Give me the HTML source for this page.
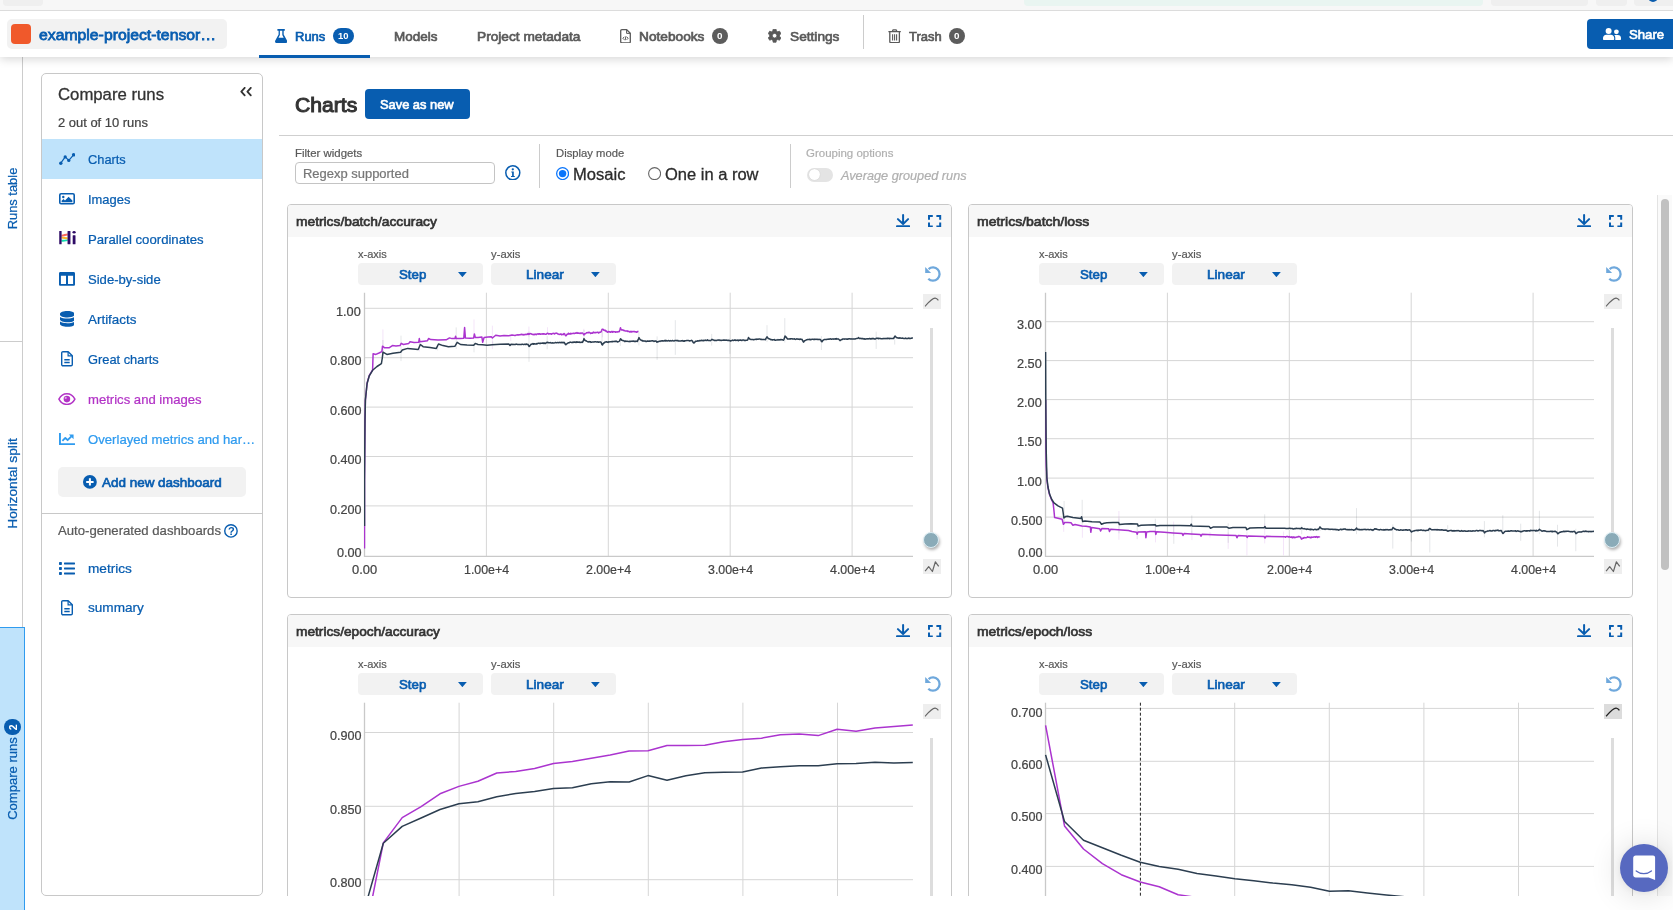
<!DOCTYPE html>
<html lang="en"><head><meta charset="utf-8"><title>Charts - Compare runs</title><style>
html,body{margin:0;padding:0}
body{width:1673px;height:910px;overflow:hidden;position:relative;background:#fff;
font-family:"Liberation Sans",Arial,sans-serif;-webkit-font-smoothing:antialiased}
.b,.i,.t{position:absolute;display:block}
.t{white-space:nowrap;line-height:1;transform-origin:0 50%}
.r{transform-origin:50% 50%}
#root{position:absolute;left:0;top:0;width:1673px;height:910px;overflow:hidden;will-change:transform}
.hd{position:absolute;left:0;top:0;z-index:6}
.clip{position:absolute;left:263px;top:136px;width:1410px;height:760px;overflow:hidden}
.clip>.in{position:absolute;left:-263px;top:-136px;width:1673px;height:910px}
</style></head>
<body>
<div id="root">
<div class="b" style="left:22px;top:57px;width:1px;height:570px;background:#ccc"></div><div class="b" style="left:0px;top:341px;width:23px;height:1px;background:#ccc"></div><span class="t r" style="left:12.40px;top:198.90px;font-size:13px;color:#085db0;width:200px;margin-left:-100px;text-align:center;margin-top:-6.50px;-webkit-text-stroke:0.234px #085db0;transform:rotate(-90deg) scaleX(0.9922);"><span id="t0">Runs table</span></span><span class="t r" style="left:12.40px;top:483.60px;font-size:13px;color:#085db0;width:200px;margin-left:-100px;text-align:center;margin-top:-6.50px;-webkit-text-stroke:0.234px #085db0;transform:rotate(-90deg) scaleX(1.0634);"><span id="t1">Horizontal split</span></span><div class="b" style="left:0px;top:627px;width:25px;height:290px;background:#bfe3fb;border-top:1px solid #2f9bef;border-right:1.500px solid #2f9bef;box-sizing:border-box"></div><span class="t r" style="left:12.40px;top:778.50px;font-size:13px;color:#085db0;width:200px;margin-left:-100px;text-align:center;margin-top:-6.50px;-webkit-text-stroke:0.234px #085db0;transform:rotate(-90deg) scaleX(1.0036);"><span id="t2">Compare runs</span></span><div class="b" style="left:4.3px;top:718.7px;width:16.4px;height:16.4px;background:#085db0;border-radius:9px"></div><span class="t r" style="left:12.60px;top:727.00px;font-size:10.5px;color:#fff;width:200px;margin-left:-100px;text-align:center;margin-top:-5.25px;font-weight:700;transform:rotate(-90deg) scaleX(0.9980);"><span id="t3">2</span></span><div class="b" style="left:41px;top:73px;width:222px;height:823px;border:1px solid #c8c8c8;border-radius:5px;box-sizing:border-box;background:#fff"></div><span class="t" id="t4" style="left:58.03px;top:87.02px;font-size:16.7px;color:#333;-webkit-text-stroke:0.301px #333;transform:scaleX(1.0025);">Compare runs</span><svg class="i" style="left:240px;top:87.4px" width="12.6" height="10" viewBox="0 0 12.6 10" ><path fill="none" stroke="#333" stroke-width="1.800" stroke-linecap="round" stroke-linejoin="round" d="M4.700.8 1.300 4.550l3.400 3.750M10.800.8 7.400 4.550l3.400 3.750"/></svg><span class="t" id="t5" style="left:57.88px;top:116.00px;font-size:13px;color:#444;-webkit-text-stroke:0.234px #444;transform:scaleX(0.9959);">2 out of 10 runs</span><div class="b" style="left:42px;top:139px;width:220px;height:40px;background:#bfe3fb"></div><svg class="i" style="left:59px;top:153px" width="16.4" height="12" viewBox="0 0 16.4 12" ><path fill="none" stroke="#085db0" stroke-width="1.150" d="M1.800 10.200 6.200 3.900 9.800 7.400 14.600 1.800"/><circle cx="1.800" cy="10.200" r="1.700" fill="#085db0"/><circle cx="6.200" cy="3.900" r="1.650" fill="#085db0"/><circle cx="9.800" cy="7.400" r="1.650" fill="#085db0"/><circle cx="14.600" cy="1.800" r="1.700" fill="#085db0"/></svg><span class="t" id="t6" style="left:88.18px;top:153.00px;font-size:13px;color:#085db0;-webkit-text-stroke:0.234px #085db0;transform:scaleX(0.9862);">Charts</span><svg class="i" style="left:59px;top:193px" width="16" height="11.6" viewBox="0 0 16 11.6" ><rect x=".8" y=".8" width="14.400" height="10" rx="1.300" fill="none" stroke="#085db0" stroke-width="1.600"/><circle cx="4.300" cy="4" r="1.200" fill="#085db0"/><path fill="#085db0" d="M2.600 9.300V7.800l1.900-1.900 1.500 1.500 3.600-3.700 3.800 3.800v1.800z"/></svg><span class="t" id="t7" style="left:88.18px;top:193.00px;font-size:13px;color:#085db0;-webkit-text-stroke:0.234px #085db0;transform:scaleX(0.9937);">Images</span><svg class="i" style="left:58.5px;top:231.3px" width="17.4" height="13.6" viewBox="0 0 17.4 13.6" ><path d="M2.400 3.700C4.500 3.700 6.500 2.600 8.700 2.600v1.900C6.500 4.500 4.500 5.800 2.400 5.800z" fill="#f8655b"/><path d="M2.400 5.800C4.500 5.800 6.500 6.300 8.700 6.300v2.100C6.500 8.400 4.500 7.600 2.400 7.600z" fill="#fbb52d"/><path d="M2.400 8.700C4.500 8.700 6.500 8.400 8.700 8.400v1.600C6.500 10 4.500 10.800 2.400 10.800z" fill="#12dcae"/><rect x=".25" y=".1" width="2.350" height="13.100" rx=".5" fill="#2e0b66"/><rect x="8.550" y=".1" width="2.900" height="13.100" rx=".5" fill="#2e0b66"/><rect x="13.700" y="4.200" width="2.800" height="9" rx=".5" fill="#2e0b66"/><ellipse cx="15.100" cy="1.300" rx="1.600" ry="1.250" fill="#2e0b66"/></svg><span class="t" id="t8" style="left:88.18px;top:233.00px;font-size:13px;color:#085db0;-webkit-text-stroke:0.234px #085db0;transform:scaleX(1.0121);">Parallel coordinates</span><svg class="i" style="left:59px;top:272.2px" width="16" height="13.8" viewBox="0 0 16 13.8" ><path fill="#085db0" fill-rule="evenodd" d="M1.400 0h13.200c.8 0 1.400.6 1.400 1.400v11c0 .8-.6 1.400-1.400 1.400H1.400C.6 13.800 0 13.200 0 12.400v-11C0 .6.600 0 1.400 0zM1.900 3.700v8.200h5.100V3.700zM9 3.700v8.200h5.100V3.700z"/></svg><span class="t" id="t9" style="left:88.18px;top:273.00px;font-size:13px;color:#085db0;-webkit-text-stroke:0.234px #085db0;transform:scaleX(1.0056);">Side-by-side</span><svg class="i" style="left:59.7px;top:311px" width="14.6" height="15.8" viewBox="0 0 14.6 15.8" ><path fill="#085db0" d="M0 2.700C0 1.200 3.300 0 7.300 0s7.300 1.200 7.300 2.700v1.100c0 1.500-3.300 2.700-7.300 2.700S0 5.300 0 3.800z"/><path fill="#085db0" d="M0 5.900c1.500 1.100 4.400 1.700 7.300 1.700s5.800-.6 7.300-1.700v2.700c0 1.500-3.300 2.700-7.300 2.700S0 10.100 0 8.600z"/><path fill="#085db0" d="M0 10.600c1.500 1.100 4.400 1.700 7.300 1.700s5.800-.6 7.300-1.700v2.500c0 1.500-3.300 2.700-7.300 2.700S0 14.600 0 13.100z"/></svg><span class="t" id="t10" style="left:88.18px;top:313.00px;font-size:13px;color:#085db0;-webkit-text-stroke:0.234px #085db0;transform:scaleX(1.0320);">Artifacts</span><svg class="i" style="left:61px;top:351.3px" width="12" height="15.4" viewBox="0 0 12 15.4" ><path fill="none" stroke="#085db0" stroke-width="1.400" stroke-linejoin="round" d="M2 .7h5.200l4.100 4.100v8.700c0 .7-.6 1.300-1.300 1.300H2c-.7 0-1.300-.6-1.300-1.300V2C.7 1.300 1.300.7 2 .7z"/><path fill="none" stroke="#085db0" stroke-width="1.200" d="M7.100.9v4h4"/><path fill="none" stroke="#085db0" stroke-width="1.600" d="M3.300 8.700h5.400M3.300 11.500h5.400"/></svg><span class="t" id="t11" style="left:88.18px;top:353.00px;font-size:13px;color:#085db0;-webkit-text-stroke:0.234px #085db0;transform:scaleX(0.9880);">Great charts</span><svg class="i" style="left:58px;top:392.8px" width="17.8" height="12.2" viewBox="0 0 17.8 12.2" ><path fill="none" stroke="#b233c6" stroke-width="1.500" d="M.9 6.100C2.600 2.900 5.500.8 8.900.8s6.300 2.100 8 5.300c-1.700 3.200-4.600 5.300-8 5.300S2.600 9.300.9 6.100z"/><circle cx="8.900" cy="6.100" r="3.300" fill="#b233c6"/><circle cx="7.700" cy="4.900" r="1.100" fill="#fff" opacity=".55"/></svg><span class="t" id="t12" style="left:88.18px;top:393.00px;font-size:13px;color:#b233c6;-webkit-text-stroke:0.234px #b233c6;transform:scaleX(1.0076);">metrics and images</span><svg class="i" style="left:59px;top:433px" width="16" height="12.2" viewBox="0 0 16 12.2" ><path fill="none" stroke="#2f9bef" stroke-width="1.900" d="M.95 0v11.250H16"/><path fill="none" stroke="#2f9bef" stroke-width="1.800" stroke-linejoin="round" d="M3.400 7.800 6.300 4.900 8.600 7.200 12.400 3.400"/><path fill="#2f9bef" d="M9.900 1.500h4.700v4.700z"/></svg><span class="t" id="t13" style="left:88.18px;top:433.00px;font-size:13px;color:#2f9bef;-webkit-text-stroke:0.234px #2f9bef;transform:scaleX(1.0104);">Overlayed metrics and har…</span><div class="b" style="left:58px;top:467.4px;width:188px;height:29.4px;background:#f2f2f2;border-radius:5px"></div><svg class="i" style="left:83.2px;top:475.2px" width="13.8" height="13.8" viewBox="0 0 13.8 13.8" ><circle cx="6.900" cy="6.900" r="6.900" fill="#085db0"/><path stroke="#fff" stroke-width="2" d="M6.900 3.200v7.400M3.200 6.900h7.400"/></svg><span class="t" id="t14" style="left:101.88px;top:476.00px;font-size:13px;color:#085db0;-webkit-text-stroke:0.65px #085db0;transform:scaleX(1.0347);">Add new dashboard</span><div class="b" style="left:42px;top:513px;width:220px;height:1px;background:#c8c8c8"></div><span class="t" id="t15" style="left:57.68px;top:524.00px;font-size:13px;color:#5a5a5a;-webkit-text-stroke:0.234px #5a5a5a;transform:scaleX(1.0111);">Auto-generated dashboards</span><svg class="i" style="left:224px;top:524px" width="14" height="14" viewBox="0 0 14 14" ><circle cx="6.950" cy="6.900" r="6.200" fill="none" stroke="#085db0" stroke-width="1.400"/></svg><span class="t" id="t16" style="left:227.76px;top:526.01px;font-size:11px;color:#085db0;font-weight:700;transform:scaleX(0.9980);">?</span><svg class="i" style="left:59px;top:561.5px" width="16" height="13" viewBox="0 0 16 13" ><rect x="0" y="0" width="2.900" height="2.900" rx=".7" fill="#085db0"/><rect x="5" y="0.5" width="11" height="1.900" rx=".4" fill="#085db0"/><rect x="0" y="5.05" width="2.900" height="2.900" rx=".7" fill="#085db0"/><rect x="5" y="5.55" width="11" height="1.900" rx=".4" fill="#085db0"/><rect x="0" y="10.1" width="2.900" height="2.900" rx=".7" fill="#085db0"/><rect x="5" y="10.6" width="11" height="1.900" rx=".4" fill="#085db0"/></svg><span class="t" id="t17" style="left:88.18px;top:562.00px;font-size:13px;color:#085db0;-webkit-text-stroke:0.234px #085db0;transform:scaleX(1.0473);">metrics</span><svg class="i" style="left:61px;top:600.2px" width="12" height="15.4" viewBox="0 0 12 15.4" ><path fill="none" stroke="#085db0" stroke-width="1.400" stroke-linejoin="round" d="M2 .7h5.200l4.100 4.100v8.700c0 .7-.6 1.300-1.300 1.300H2c-.7 0-1.300-.6-1.300-1.300V2C.7 1.300 1.300.7 2 .7z"/><path fill="none" stroke="#085db0" stroke-width="1.200" d="M7.100.9v4h4"/><path fill="none" stroke="#085db0" stroke-width="1.600" d="M3.300 8.700h5.400M3.300 11.500h5.400"/></svg><span class="t" id="t18" style="left:88.18px;top:601.00px;font-size:13px;color:#085db0;-webkit-text-stroke:0.234px #085db0;transform:scaleX(1.0452);">summary</span><span class="t" id="t19" style="left:294.98px;top:95.00px;font-size:20.5px;color:#333;-webkit-text-stroke:1.025px #333;transform:scaleX(1.0307);">Charts</span><div class="b" style="left:365px;top:89px;width:105px;height:30px;background:#085db0;border-radius:4px"></div><span class="t" id="t20" style="left:380.48px;top:98.00px;font-size:13px;color:#fff;-webkit-text-stroke:0.65px #fff;transform:scaleX(0.9883);">Save as new</span><div class="b" style="left:279px;top:135px;width:1394px;height:1px;background:#cfcfcf"></div><span class="t" id="t21" style="left:295.35px;top:148.00px;font-size:11.2px;color:#595959;-webkit-text-stroke:0.202px #595959;transform:scaleX(1.0198);">Filter widgets</span><div class="b" style="left:295px;top:162px;width:200px;height:22px;border:1px solid #c4c4c4;border-radius:4px;box-sizing:border-box;background:#fff"></div><span class="t" id="t22" style="left:302.98px;top:167.00px;font-size:13px;color:#777;-webkit-text-stroke:0.234px #777;transform:scaleX(0.9964);">Regexp supported</span><svg class="i" style="left:505.3px;top:164.9px" width="15.6" height="15.6" viewBox="0 0 15.6 15.6" ><circle cx="7.800" cy="7.800" r="7" fill="none" stroke="#085db0" stroke-width="1.500"/><circle cx="7.800" cy="4.300" r="1.150" fill="#085db0"/><path fill="#085db0" d="M6.300 6.400h2.500v4.500h1v1.100H6v-1.100h1.100V7.500H6.300z"/></svg><div class="b" style="left:539px;top:144px;width:1px;height:43.5px;background:#ccc"></div><span class="t" id="t23" style="left:556.25px;top:148.00px;font-size:11.2px;color:#595959;-webkit-text-stroke:0.202px #595959;transform:scaleX(1.0063);">Display mode</span><svg class="i" style="left:556px;top:166.8px" width="13.2" height="13.2" viewBox="0 0 13.2 13.2" ><circle cx="6.600" cy="6.600" r="5.950" fill="#fff" stroke="#0a75fb" stroke-width="1.300"/><circle cx="6.600" cy="6.600" r="3.700" fill="#0a75fb"/></svg><span class="t" id="t24" style="left:573.06px;top:167.00px;font-size:16px;color:#2b2b2b;-webkit-text-stroke:0.288px #2b2b2b;transform:scaleX(1.0346);">Mosaic</span><svg class="i" style="left:647.9px;top:166.8px" width="13.2" height="13.2" viewBox="0 0 13.2 13.2" ><circle cx="6.600" cy="6.600" r="6" fill="#fff" stroke="#666" stroke-width="1.100"/></svg><span class="t" id="t25" style="left:665.26px;top:167.00px;font-size:16px;color:#2b2b2b;-webkit-text-stroke:0.288px #2b2b2b;transform:scaleX(1.0311);">One in a row</span><div class="b" style="left:790px;top:144px;width:1px;height:43.5px;background:#ccc"></div><span class="t" id="t26" style="left:806.45px;top:148.00px;font-size:11.2px;color:#b0b0b0;-webkit-text-stroke:0.202px #b0b0b0;transform:scaleX(1.0257);">Grouping options</span><div class="b" style="left:807.3px;top:168px;width:25.6px;height:13.7px;background:#e4e4e4;border-radius:7px"></div><div class="b" style="left:808.5px;top:169.3px;width:11px;height:11px;background:#fff;border-radius:6px;box-shadow:0 0 1px rgba(0,0,0,.2)"></div><span class="t" id="t27" style="left:840.68px;top:169.00px;font-size:13px;color:#b0b0b0;-webkit-text-stroke:0.234px #b0b0b0;font-style:italic;transform:scaleX(0.9778);">Average grouped runs</span><div class="clip"><div class="in"><div class="b" style="left:1657px;top:195px;width:15px;height:720px;background:#fafafa;border-left:1px solid #e3e3e3;box-sizing:border-box"></div><div class="b" style="left:1661px;top:199px;width:8px;height:371px;background:#c1c1c1;border-radius:4px"></div><div class="b" style="left:287px;top:204px;width:665px;height:394px;border:1px solid #c8c8c8;border-radius:4px;box-sizing:border-box;background:#fff"></div><div class="b" style="left:288px;top:205px;width:663px;height:31.7px;background:#f7f7f7;border-radius:3px 3px 0 0"></div><span class="t" id="t28" style="left:296.48px;top:215.00px;font-size:13px;color:#333;-webkit-text-stroke:0.65px #333;transform:scaleX(1.0597);">metrics/batch/accuracy</span><svg class="i" style="left:896.2px;top:214.1px" width="14.2" height="13.4" viewBox="0 0 14.2 13.4" ><path fill="none" stroke="#085db0" stroke-width="2" stroke-linecap="round" stroke-linejoin="round" d="M7.100 1v8.600M1.900 5.100l5.200 5 5-5"/><path stroke="#085db0" stroke-width="2" stroke-linecap="round" d="M1 12.300h12.200"/></svg><svg class="i" style="left:928.4px;top:214.5px" width="13.2" height="12.4" viewBox="0 0 13.2 12.4" ><path fill="none" stroke="#085db0" stroke-width="2" d="M1 4.800V1h3.800M8.400 1h3.800v3.800M12.200 7.600v3.800H8.400M4.800 11.400H1V7.600"/></svg><span class="t" id="t29" style="left:357.85px;top:249.01px;font-size:11.2px;color:#595959;-webkit-text-stroke:0.202px #595959;transform:scaleX(0.9859);">x-axis</span><div class="b" style="left:358px;top:263.2px;width:125px;height:21.6px;background:#f2f2f2;border-radius:4px"></div><span class="t" id="t30" style="left:398.68px;top:268.01px;font-size:13px;color:#085db0;-webkit-text-stroke:0.65px #085db0;transform:scaleX(1.0194);">Step</span><svg class="i" style="left:458.2px;top:272.2px" width="8.8" height="5.2" viewBox="0 0 8.8 5.2" ><path fill="#085db0" d="M0 0h8.800L4.400 5.200z"/></svg><span class="t" id="t31" style="left:490.65px;top:249.01px;font-size:11.2px;color:#595959;-webkit-text-stroke:0.202px #595959;transform:scaleX(1.0065);">y-axis</span><div class="b" style="left:491px;top:263.2px;width:125px;height:21.6px;background:#f2f2f2;border-radius:4px"></div><span class="t" id="t32" style="left:526.48px;top:268.01px;font-size:13px;color:#085db0;-webkit-text-stroke:0.65px #085db0;transform:scaleX(1.0451);">Linear</span><svg class="i" style="left:591.1px;top:272.2px" width="8.8" height="5.2" viewBox="0 0 8.8 5.2" ><path fill="#085db0" d="M0 0h8.800L4.400 5.200z"/></svg><svg class="i" style="left:924.8px;top:266.3px" width="16" height="16" viewBox="0 0 16 16" ><path fill="none" stroke="#6fa8dc" stroke-width="2.300" d="M3.600 3.100A6.600 6.600 0 1 1 3.300 12.700"/><path fill="#6fa8dc" d="M.2 1v5.900h5.900z"/></svg><div class="b" style="left:923.1px;top:294.2px;width:18px;height:14.7px;background:#eeeeee"></div><svg class="i" style="left:923.1px;top:294.2px" width="18" height="14.7" viewBox="0 0 18 14.7" ><path fill="none" stroke="#666" stroke-width="1.1" d="M2.100 12.300C5 9 8.500 4.500 12 4.100c1.600-.1 2.600 1.100 3.400 2.300"/></svg><div class="b" style="left:930.1px;top:328.3px;width:2.8px;height:205px;background:#dddddd"></div><div class="b" style="left:923.2px;top:532.1px;width:15.8px;height:15.8px;background:#8aabb8;border-radius:8px;border:1.800px solid #dcedf4;box-sizing:border-box;box-shadow:1px 2px 3px rgba(0,0,0,.30)"></div><div class="b" style="left:923.1px;top:558.9px;width:18px;height:14.9px;background:#eeeeee"></div><svg class="i" style="left:923.1px;top:558.9px" width="18" height="14.9" viewBox="0 0 18 14.9" ><path fill="none" stroke="#666" stroke-width="1.200" stroke-linejoin="round" d="M2.100 12.200 5.700 7.700 9.400 12.500 12.400 2.800 15.700 7.400"/></svg><svg class="i" style="left:0;top:0" width="1673" height="910" viewBox="0 0 1673 910"><path d="M486.4 292.7V556.3M608.3 292.7V556.3M730.2 292.7V556.3M852.1 292.7V556.3M364.5 308.3H913.0M364.5 357.7H913.0M364.5 407.1H913.0M364.5 456.5H913.0M364.5 505.9H913.0" fill="none" stroke="#d6d6d6" stroke-width="1"/><path d="M364.5 292.7V556.3H913.0" fill="none" stroke="#c9c9c9" stroke-width="1.300"/><clipPath id="cp287"><rect x="364.0" y="292.7" width="549.0" height="263.6"/></clipPath><g clip-path="url(#cp287)"><path d="M382.9 329.4V356.5M419.4 338.8V351.4M474.0 319.5V339.0M492.4 325.7V349.1M510.8 335.3V341.0M528.9 326.6V336.9M547.5 327.3V333.3M583.8 328.8V334.8M602.4 329.4V337.3" fill="none" stroke="#ab34cf" stroke-width="1" opacity=".13"/><path d="M382.9 340.0V354.0M401.0 335.7V361.1M419.3 340.9V346.9M437.6 345.7V350.4M456.2 327.4V348.9M474.0 341.5V352.3M492.8 341.5V344.8M529.0 331.5V361.8M547.2 335.9V349.3M584.1 329.9V339.0M602.0 330.5V344.7M620.3 338.9V345.9M638.9 331.9V345.4M657.1 336.4V359.9M675.3 320.2V354.8M711.7 333.9V345.6M729.9 338.5V353.9M767.0 325.2V342.1M784.8 318.1V342.6M821.4 336.1V350.0M876.2 331.7V348.9M894.7 336.5V344.6" fill="none" stroke="#2c3e50" stroke-width="1" opacity=".13"/><path d="M364.5 548.6L364.5 480.0L365.0 420.0L365.4 400.0L367.1 383.0L369.3 375.3L372.6 370.0L373.1 353.8L375.9 354.4L379.0 353.0L381.9 351.6L382.5 346.2L384.7 347.8L389.0 347.8L392.4 345.6L396.0 345.9L400.0 345.6L401.2 343.4L403.4 344.5L406.0 344.0L408.8 343.4L410.0 341.8L414.0 342.4L418.7 342.3L419.3 338.5L419.8 341.8L424.0 341.2L427.5 340.7L428.6 338.5L430.8 339.6L438.0 340.1L446.2 339.8L449.5 337.9L452.0 338.6L455.0 338.5L455.6 336.3L456.2 338.4L460.0 338.6L463.8 338.2L464.6 327.5L465.4 337.9L470.0 338.2L473.7 337.9L474.4 334.0L475.3 337.4L478.0 337.6L481.9 337.1L482.7 342.3L484.1 337.4L488.0 337.0L491.3 336.8L492.4 338.0L495.7 335.2L500.0 336.0L504.0 335.4L508.8 335.7L512.0 335.1L515.0 335.4L515.5 335.4L516.0 335.1L516.5 335.0L517.0 335.1L517.5 334.8L518.0 334.7L518.5 335.0L519.0 334.9L519.5 334.7L520.0 334.9L520.5 334.6L521.0 334.3L521.5 334.3L522.0 334.7L522.5 334.5L523.0 334.7L523.5 334.9L524.0 334.4L524.5 334.7L525.0 334.7L525.5 334.3L526.0 334.6L526.5 334.3L527.0 334.5L527.5 334.2L528.0 333.6L528.5 334.4L529.0 333.8L529.5 334.1L530.0 333.5L530.5 333.8L531.0 333.8L531.5 333.9L532.0 334.3L532.5 334.4L533.0 334.3L533.5 334.4L534.0 334.8L534.5 334.5L535.0 334.1L535.5 334.5L536.0 334.3L536.5 334.6L537.0 333.9L537.5 334.1L538.0 333.8L538.5 334.0L539.0 334.3L539.5 333.8L540.0 333.7L540.5 334.2L541.0 334.2L541.5 333.9L542.0 334.1L542.5 333.8L543.0 334.2L543.5 333.8L544.0 333.8L544.5 333.9L545.0 334.2L545.5 334.3L546.0 334.3L546.5 333.9L547.0 333.5L547.5 333.3L548.0 333.4L548.5 333.9L549.0 334.0L549.5 333.7L550.0 333.7L550.5 333.8L551.0 334.0L551.5 334.2L552.0 333.8L552.5 333.6L553.0 333.3L553.5 333.5L554.0 333.5L554.5 333.9L555.0 333.4L555.5 333.4L556.0 333.1L556.5 333.2L557.0 333.3L557.5 333.7L558.0 334.1L558.5 334.1L559.0 334.4L559.5 334.4L560.0 334.2L560.5 334.0L561.0 333.9L561.5 334.8L562.0 334.2L562.5 334.4L563.0 334.7L563.5 334.2L564.0 333.6L564.5 333.7L565.0 334.7L565.5 335.8L566.0 335.8L566.5 335.2L567.0 334.3L567.5 334.1L568.0 334.2L568.5 333.2L569.0 333.9L569.5 333.8L570.0 334.0L570.5 333.4L571.0 334.0L571.5 333.4L572.0 333.6L572.5 333.6L573.0 333.6L573.5 333.2L574.0 333.4L574.5 333.5L575.0 333.2L575.5 333.0L576.0 333.3L576.5 333.1L577.0 332.6L577.5 333.2L578.0 333.2L578.5 333.0L579.0 333.2L579.5 333.3L580.0 333.5L580.5 333.1L581.0 333.5L581.5 333.2L582.0 332.9L582.5 332.9L583.0 333.6L583.5 334.3L584.0 334.9L584.5 333.8L585.0 333.7L585.5 333.8L586.0 333.3L586.5 332.8L587.0 332.6L587.5 332.8L588.0 332.5L588.5 332.8L589.0 332.2L589.5 332.6L590.0 332.7L590.5 333.5L591.0 333.3L591.5 332.9L592.0 333.3L592.5 333.2L593.0 332.4L593.5 332.1L594.0 332.9L594.5 332.5L595.0 332.5L595.5 332.7L596.0 332.5L596.5 332.6L597.0 332.3L597.5 332.3L598.0 332.2L598.5 333.0L599.0 332.8L599.5 332.2L600.0 332.2L600.5 332.2L601.0 331.8L601.5 330.8L602.0 329.5L602.5 329.2L603.0 329.2L603.5 329.9L604.0 330.3L604.5 330.5L605.0 330.2L605.5 330.5L606.0 331.4L606.5 331.1L607.0 331.7L607.5 332.2L608.0 332.1L608.5 331.6L609.0 331.6L609.5 332.0L610.0 331.8L610.5 332.3L611.0 332.1L611.5 331.4L612.0 331.5L612.5 332.2L613.0 331.5L613.5 331.8L614.0 331.9L614.5 331.7L615.0 331.8L615.5 332.3L616.0 331.9L616.5 331.9L617.0 331.8L617.5 332.1L618.0 331.8L618.5 331.7L619.0 331.8L619.5 331.0L620.0 329.5L620.5 327.8L621.0 329.0L621.5 330.0L622.0 329.8L622.5 330.0L623.0 329.9L623.5 330.5L624.0 330.3L624.5 330.7L625.0 330.9L625.5 331.1L626.0 331.0L626.5 331.1L627.0 330.8L627.5 331.4L628.0 331.1L628.5 331.4L629.0 331.5L629.5 332.0L630.0 331.6L630.5 331.9L631.0 331.4L631.5 332.0L632.0 331.6L632.5 331.7L633.0 331.6L633.5 331.6L634.0 331.7L634.5 331.5L635.0 331.7L635.5 331.9L636.0 331.7L636.5 332.2L637.0 332.1L637.5 331.6L638.0 331.5L638.5 331.6L638.5 331.6" fill="none" stroke="#ab34cf" stroke-width="1.500" stroke-linejoin="round"/><path d="M364.5 525.9L364.5 480.0L365.0 420.0L365.4 400.0L367.1 383.5L369.3 375.8L372.6 370.3L377.0 366.5L381.4 363.7L382.3 358.0L383.0 352.2L386.9 354.4L393.0 353.3L400.6 352.2L402.3 350.0L407.7 348.4L413.0 349.0L418.2 349.5L420.4 344.5L423.1 346.7L430.0 347.6L436.3 348.4L438.5 344.0L443.0 345.6L448.4 346.7L455.0 346.2L457.2 342.3L460.5 344.5L467.0 345.0L473.7 345.3L475.3 343.4L478.0 344.5L482.5 344.8L487.0 345.2L492.4 344.8L500.0 344.3L508.8 344.0L510.0 345.5L511.0 344.2L515.0 344.5L515.5 344.4L516.0 344.1L516.5 344.2L517.0 344.3L517.5 344.4L518.0 344.4L518.5 344.5L519.0 344.6L519.5 344.4L520.0 344.5L520.5 344.5L521.0 344.6L521.5 344.5L522.0 344.3L522.5 344.2L523.0 344.4L523.5 344.4L524.0 344.4L524.5 344.3L525.0 344.3L525.5 344.5L526.0 344.3L526.5 344.0L527.0 344.6L527.5 344.4L528.0 344.3L528.5 345.3L529.0 346.4L529.5 346.3L530.0 345.5L530.5 345.0L531.0 344.3L531.5 344.3L532.0 344.0L532.5 344.1L533.0 343.5L533.5 344.2L534.0 343.7L534.5 343.8L535.0 344.0L535.5 344.1L536.0 344.1L536.5 343.6L537.0 343.9L537.5 343.7L538.0 343.3L538.5 343.2L539.0 343.3L539.5 343.4L540.0 343.3L540.5 343.5L541.0 343.2L541.5 343.3L542.0 343.2L542.5 343.0L543.0 343.2L543.5 343.4L544.0 342.9L544.5 343.4L545.0 343.2L545.5 343.5L546.0 343.1L546.5 342.5L547.0 342.4L547.5 342.2L548.0 342.7L548.5 342.6L549.0 342.8L549.5 342.7L550.0 342.7L550.5 342.6L551.0 342.9L551.5 343.0L552.0 342.9L552.5 342.8L553.0 342.9L553.5 343.0L554.0 343.1L554.5 342.9L555.0 342.7L555.5 342.4L556.0 342.7L556.5 342.8L557.0 342.7L557.5 342.6L558.0 342.6L558.5 342.7L559.0 342.7L559.5 342.3L560.0 342.6L560.5 342.5L561.0 342.8L561.5 342.5L562.0 342.3L562.5 342.7L563.0 342.6L563.5 342.7L564.0 342.3L564.5 342.8L565.0 343.6L565.5 344.6L566.0 344.7L566.5 343.9L567.0 343.8L567.5 343.3L568.0 343.0L568.5 342.8L569.0 342.8L569.5 342.5L570.0 342.3L570.5 342.1L571.0 342.3L571.5 342.4L572.0 342.5L572.5 342.3L573.0 342.5L573.5 342.2L574.0 342.0L574.5 342.2L575.0 342.1L575.5 342.2L576.0 342.5L576.5 341.9L577.0 342.2L577.5 342.0L578.0 342.3L578.5 342.2L579.0 342.0L579.5 341.9L580.0 342.5L580.5 342.4L581.0 342.2L581.5 342.4L582.0 342.1L582.5 342.4L583.0 341.4L583.5 340.4L584.0 338.6L584.5 339.5L585.0 340.3L585.5 340.7L586.0 340.8L586.5 341.0L587.0 341.4L587.5 341.6L588.0 341.9L588.5 342.0L589.0 341.6L589.5 341.7L590.0 342.0L590.5 341.7L591.0 342.4L591.5 342.2L592.0 342.1L592.5 341.9L593.0 342.0L593.5 342.1L594.0 342.1L594.5 341.8L595.0 341.8L595.5 341.7L596.0 341.9L596.5 342.1L597.0 342.1L597.5 341.8L598.0 342.0L598.5 342.2L599.0 342.0L599.5 342.0L600.0 342.1L600.5 341.9L601.0 342.1L601.5 343.4L602.0 344.6L602.5 345.0L603.0 343.9L603.5 343.4L604.0 342.8L604.5 342.7L605.0 342.1L605.5 342.0L606.0 342.0L606.5 341.7L607.0 341.9L607.5 342.2L608.0 342.4L608.5 341.8L609.0 342.1L609.5 341.9L610.0 341.7L610.5 341.8L611.0 341.8L611.5 341.8L612.0 341.4L612.5 341.7L613.0 341.5L613.5 341.4L614.0 341.5L614.5 341.5L615.0 341.3L615.5 341.3L616.0 341.5L616.5 341.2L617.0 341.6L617.5 342.0L618.0 341.7L618.5 341.7L619.0 341.4L619.5 341.0L620.0 339.9L620.5 338.8L621.0 339.2L621.5 340.0L622.0 340.3L622.5 340.5L623.0 340.5L623.5 340.8L624.0 340.8L624.5 341.2L625.0 341.6L625.5 341.0L626.0 341.2L626.5 341.4L627.0 341.2L627.5 341.3L628.0 341.4L628.5 341.5L629.0 341.5L629.5 341.3L630.0 341.8L630.5 341.3L631.0 341.2L631.5 341.2L632.0 341.4L632.5 341.1L633.0 341.3L633.5 341.0L634.0 341.4L634.5 341.3L635.0 341.3L635.5 341.6L636.0 341.1L636.5 341.2L637.0 341.4L637.5 341.4L638.0 339.8L638.5 338.8L639.0 337.6L639.5 338.7L640.0 339.2L640.5 339.9L641.0 340.1L641.5 340.5L642.0 340.3L642.5 340.9L643.0 340.8L643.5 340.9L644.0 341.2L644.5 341.1L645.0 340.9L645.5 341.2L646.0 341.6L646.5 341.4L647.0 341.3L647.5 341.0L648.0 341.0L648.5 341.3L649.0 341.2L649.5 341.0L650.0 341.2L650.5 341.1L651.0 341.0L651.5 340.9L652.0 340.7L652.5 340.7L653.0 341.1L653.5 341.0L654.0 341.5L654.5 341.1L655.0 341.3L655.5 340.9L656.0 341.0L656.5 341.4L657.0 342.3L657.5 341.8L658.0 341.8L658.5 341.7L659.0 341.3L659.5 341.2L660.0 341.4L660.5 341.0L661.0 341.1L661.5 341.1L662.0 340.7L662.5 341.0L663.0 340.8L663.5 340.9L664.0 341.0L664.5 340.8L665.0 340.4L665.5 340.9L666.0 340.4L666.5 340.7L667.0 341.0L667.5 340.9L668.0 340.7L668.5 340.6L669.0 340.7L669.5 341.0L670.0 340.9L670.5 340.6L671.0 340.9L671.5 340.9L672.0 340.7L672.5 340.5L673.0 340.7L673.5 340.9L674.0 340.9L674.5 340.8L675.0 340.4L675.5 340.4L676.0 340.5L676.5 340.5L677.0 340.8L677.5 340.5L678.0 340.6L678.5 341.1L679.0 340.9L679.5 341.1L680.0 340.9L680.5 341.0L681.0 341.0L681.5 340.7L682.0 340.9L682.5 340.5L683.0 341.0L683.5 341.2L684.0 340.8L684.5 341.2L685.0 340.7L685.5 340.7L686.0 340.7L686.5 340.6L687.0 340.4L687.5 340.6L688.0 340.6L688.5 340.6L689.0 340.7L689.5 341.0L690.0 340.8L690.5 340.7L691.0 340.8L691.5 340.3L692.0 340.7L692.5 341.0L693.0 342.2L693.5 342.9L694.0 343.1L694.5 342.3L695.0 342.0L695.5 341.3L696.0 341.2L696.5 341.2L697.0 341.2L697.5 340.7L698.0 340.9L698.5 341.0L699.0 340.8L699.5 340.5L700.0 340.9L700.5 340.6L701.0 340.3L701.5 340.3L702.0 340.7L702.5 340.5L703.0 340.4L703.5 340.8L704.0 340.3L704.5 340.5L705.0 340.5L705.5 340.1L706.0 340.4L706.5 340.4L707.0 340.3L707.5 339.8L708.0 340.4L708.5 340.5L709.0 340.5L709.5 340.4L710.0 340.7L710.5 340.5L711.0 340.2L711.5 339.8L712.0 339.3L712.5 339.6L713.0 340.0L713.5 340.1L714.0 340.1L714.5 340.6L715.0 340.4L715.5 340.5L716.0 340.3L716.5 340.4L717.0 340.4L717.5 340.1L718.0 339.9L718.5 340.2L719.0 340.1L719.5 340.0L720.0 340.5L720.5 340.3L721.0 340.3L721.5 340.4L722.0 340.3L722.5 340.2L723.0 340.2L723.5 340.0L724.0 340.2L724.5 340.1L725.0 340.2L725.5 340.3L726.0 340.0L726.5 340.3L727.0 340.1L727.5 340.4L728.0 340.4L728.5 340.3L729.0 340.3L729.5 340.6L730.0 340.7L730.5 341.1L731.0 340.8L731.5 340.6L732.0 340.5L732.5 340.1L733.0 340.4L733.5 340.4L734.0 340.3L734.5 340.0L735.0 339.9L735.5 340.4L736.0 340.1L736.5 340.3L737.0 340.4L737.5 340.3L738.0 340.0L738.5 340.7L739.0 340.2L739.5 340.3L740.0 340.0L740.5 340.3L741.0 340.0L741.5 340.4L742.0 340.5L742.5 340.0L743.0 340.0L743.5 340.0L744.0 340.1L744.5 340.6L745.0 340.6L745.5 340.5L746.0 340.2L746.5 340.2L747.0 340.3L747.5 340.1L748.0 339.2L748.5 337.5L749.0 338.3L749.5 338.6L750.0 339.2L750.5 339.4L751.0 339.4L751.5 339.4L752.0 339.4L752.5 339.5L753.0 339.5L753.5 339.7L754.0 339.7L754.5 339.4L755.0 339.4L755.5 339.3L756.0 339.2L756.5 339.5L757.0 339.1L757.5 339.2L758.0 339.2L758.5 339.2L759.0 338.9L759.5 339.0L760.0 339.1L760.5 339.3L761.0 339.5L761.5 339.3L762.0 339.6L762.5 339.5L763.0 339.6L763.5 339.6L764.0 339.6L764.5 339.4L765.0 339.6L765.5 339.8L766.0 338.3L766.5 337.8L767.0 336.8L767.5 337.5L768.0 338.2L768.5 338.5L769.0 338.7L769.5 339.1L770.0 339.1L770.5 339.5L771.0 339.7L771.5 339.6L772.0 339.8L772.5 340.0L773.0 339.7L773.5 339.7L774.0 339.7L774.5 339.6L775.0 340.2L775.5 340.3L776.0 340.1L776.5 339.9L777.0 340.0L777.5 340.0L778.0 339.6L778.5 339.9L779.0 340.0L779.5 339.7L780.0 339.9L780.5 339.5L781.0 339.7L781.5 339.6L782.0 339.8L782.5 339.7L783.0 340.0L783.5 340.2L784.0 339.3L784.5 337.7L785.0 336.1L785.5 336.3L786.0 337.1L786.5 337.6L787.0 338.4L787.5 338.9L788.0 338.9L788.5 339.0L789.0 339.1L789.5 338.9L790.0 338.8L790.5 339.0L791.0 338.8L791.5 338.8L792.0 338.7L792.5 339.0L793.0 339.0L793.5 339.0L794.0 339.0L794.5 338.8L795.0 339.3L795.5 339.4L796.0 339.2L796.5 338.9L797.0 338.8L797.5 339.1L798.0 339.2L798.5 339.1L799.0 339.3L799.5 339.5L800.0 339.1L800.5 339.1L801.0 339.4L801.5 339.4L802.0 339.2L802.5 340.3L803.0 341.4L803.5 342.2L804.0 341.6L804.5 340.7L805.0 340.7L805.5 340.4L806.0 340.1L806.5 339.8L807.0 339.7L807.5 339.5L808.0 339.5L808.5 339.4L809.0 339.5L809.5 339.3L810.0 339.8L810.5 339.4L811.0 339.7L811.5 339.4L812.0 339.3L812.5 339.3L813.0 339.3L813.5 339.4L814.0 339.3L814.5 339.5L815.0 339.2L815.5 339.3L816.0 339.4L816.5 339.3L817.0 339.3L817.5 339.4L818.0 339.3L818.5 339.4L819.0 339.4L819.5 339.4L820.0 339.3L820.5 339.6L821.0 340.4L821.5 341.6L822.0 341.7L822.5 341.0L823.0 340.2L823.5 340.0L824.0 339.7L824.5 339.4L825.0 339.5L825.5 339.5L826.0 339.6L826.5 339.6L827.0 339.3L827.5 339.2L828.0 339.2L828.5 339.1L829.0 339.3L829.5 339.0L830.0 338.9L830.5 338.8L831.0 339.1L831.5 339.3L832.0 339.0L832.5 338.9L833.0 339.1L833.5 339.0L834.0 339.2L834.5 338.9L835.0 339.0L835.5 338.7L836.0 339.2L836.5 338.5L837.0 338.9L837.5 338.9L838.0 338.9L838.5 339.0L839.0 339.5L839.5 340.0L840.0 340.6L840.5 340.3L841.0 339.9L841.5 339.6L842.0 339.6L842.5 339.1L843.0 339.1L843.5 339.1L844.0 339.1L844.5 339.2L845.0 338.9L845.5 339.1L846.0 339.1L846.5 339.0L847.0 339.3L847.5 339.3L848.0 338.7L848.5 339.0L849.0 338.9L849.5 338.7L850.0 338.9L850.5 339.1L851.0 338.8L851.5 338.9L852.0 339.1L852.5 339.1L853.0 339.0L853.5 339.1L854.0 338.9L854.5 339.1L855.0 339.1L855.5 338.8L856.0 338.6L856.5 338.4L857.0 338.6L857.5 338.4L858.0 338.0L858.5 337.5L859.0 338.1L859.5 338.6L860.0 338.4L860.5 338.5L861.0 338.3L861.5 338.7L862.0 338.7L862.5 338.5L863.0 338.6L863.5 338.9L864.0 339.0L864.5 338.7L865.0 339.2L865.5 339.0L866.0 339.1L866.5 338.8L867.0 338.8L867.5 338.8L868.0 339.0L868.5 338.7L869.0 338.7L869.5 338.5L870.0 338.6L870.5 339.0L871.0 338.7L871.5 338.9L872.0 338.4L872.5 338.7L873.0 338.5L873.5 338.5L874.0 338.7L874.5 339.1L875.0 339.0L875.5 339.0L876.0 338.5L876.5 338.2L877.0 338.2L877.5 338.4L878.0 338.2L878.5 338.7L879.0 338.3L879.5 338.6L880.0 338.4L880.5 338.5L881.0 338.7L881.5 338.7L882.0 338.7L882.5 338.7L883.0 338.6L883.5 338.5L884.0 338.7L884.5 338.6L885.0 338.6L885.5 338.6L886.0 338.7L886.5 338.4L887.0 338.7L887.5 338.3L888.0 338.2L888.5 338.6L889.0 338.3L889.5 338.8L890.0 338.3L890.5 338.6L891.0 338.4L891.5 338.5L892.0 338.6L892.5 338.6L893.0 338.6L893.5 338.5L894.0 337.8L894.5 336.9L895.0 336.0L895.5 336.8L896.0 336.9L896.5 337.5L897.0 337.7L897.5 337.8L898.0 338.1L898.5 338.0L899.0 338.2L899.5 337.8L900.0 338.2L900.5 338.1L901.0 338.1L901.5 338.3L902.0 338.2L902.5 338.1L903.0 338.2L903.5 338.4L904.0 338.5L904.5 338.5L905.0 338.5L905.5 338.1L906.0 338.5L906.5 338.4L907.0 338.7L907.5 338.4L908.0 338.4L908.5 338.1L909.0 338.5L909.5 338.3L910.0 338.5L910.5 338.4L911.0 338.3L911.5 338.2L912.0 338.0L912.5 338.1L912.8 338.4" fill="none" stroke="#2c3e50" stroke-width="1.500" stroke-linejoin="round"/></g></svg><span class="t" id="t33" style="left:336.42px;top:306.01px;font-size:12px;color:#444;-webkit-text-stroke:0.216px #444;transform:scaleX(1.0608);">1.00</span><span class="t" id="t34" style="left:329.72px;top:355.02px;font-size:12px;color:#444;-webkit-text-stroke:0.216px #444;transform:scaleX(1.0482);">0.800</span><span class="t" id="t35" style="left:329.72px;top:405.01px;font-size:12px;color:#444;-webkit-text-stroke:0.216px #444;transform:scaleX(1.0482);">0.600</span><span class="t" id="t36" style="left:329.72px;top:454.00px;font-size:12px;color:#444;-webkit-text-stroke:0.216px #444;transform:scaleX(1.0482);">0.400</span><span class="t" id="t37" style="left:329.72px;top:504.01px;font-size:12px;color:#444;-webkit-text-stroke:0.216px #444;transform:scaleX(1.0482);">0.200</span><span class="t" id="t38" style="left:336.52px;top:547.01px;font-size:12px;color:#444;-webkit-text-stroke:0.216px #444;transform:scaleX(1.0565);">0.00</span><span class="t" id="t39" style="left:352.02px;top:564.01px;font-size:12px;color:#444;-webkit-text-stroke:0.216px #444;transform:scaleX(1.0737);">0.00</span><span class="t" id="t40" style="left:463.92px;top:564.01px;font-size:12px;color:#444;-webkit-text-stroke:0.216px #444;transform:scaleX(1.0311);">1.00e+4</span><span class="t" id="t41" style="left:585.82px;top:564.01px;font-size:12px;color:#444;-webkit-text-stroke:0.216px #444;transform:scaleX(1.0311);">2.00e+4</span><span class="t" id="t42" style="left:707.72px;top:564.01px;font-size:12px;color:#444;-webkit-text-stroke:0.216px #444;transform:scaleX(1.0311);">3.00e+4</span><span class="t" id="t43" style="left:829.62px;top:564.01px;font-size:12px;color:#444;-webkit-text-stroke:0.216px #444;transform:scaleX(1.0311);">4.00e+4</span><div class="b" style="left:968px;top:204px;width:665px;height:394px;border:1px solid #c8c8c8;border-radius:4px;box-sizing:border-box;background:#fff"></div><div class="b" style="left:969px;top:205px;width:663px;height:31.7px;background:#f7f7f7;border-radius:3px 3px 0 0"></div><span class="t" id="t44" style="left:977.48px;top:215.00px;font-size:13px;color:#333;-webkit-text-stroke:0.65px #333;transform:scaleX(1.0781);">metrics/batch/loss</span><svg class="i" style="left:1577.2px;top:214.1px" width="14.2" height="13.4" viewBox="0 0 14.2 13.4" ><path fill="none" stroke="#085db0" stroke-width="2" stroke-linecap="round" stroke-linejoin="round" d="M7.100 1v8.600M1.900 5.100l5.200 5 5-5"/><path stroke="#085db0" stroke-width="2" stroke-linecap="round" d="M1 12.300h12.200"/></svg><svg class="i" style="left:1609.4px;top:214.5px" width="13.2" height="12.4" viewBox="0 0 13.2 12.4" ><path fill="none" stroke="#085db0" stroke-width="2" d="M1 4.800V1h3.800M8.400 1h3.800v3.800M12.200 7.600v3.800H8.400M4.800 11.400H1V7.600"/></svg><span class="t" id="t45" style="left:1038.85px;top:249.01px;font-size:11.2px;color:#595959;-webkit-text-stroke:0.202px #595959;transform:scaleX(0.9859);">x-axis</span><div class="b" style="left:1039px;top:263.2px;width:125px;height:21.6px;background:#f2f2f2;border-radius:4px"></div><span class="t" id="t46" style="left:1079.68px;top:268.01px;font-size:13px;color:#085db0;-webkit-text-stroke:0.65px #085db0;transform:scaleX(1.0194);">Step</span><svg class="i" style="left:1139.2px;top:272.2px" width="8.8" height="5.2" viewBox="0 0 8.8 5.2" ><path fill="#085db0" d="M0 0h8.800L4.400 5.200z"/></svg><span class="t" id="t47" style="left:1171.65px;top:249.01px;font-size:11.2px;color:#595959;-webkit-text-stroke:0.202px #595959;transform:scaleX(1.0065);">y-axis</span><div class="b" style="left:1172px;top:263.2px;width:125px;height:21.6px;background:#f2f2f2;border-radius:4px"></div><span class="t" id="t48" style="left:1207.48px;top:268.01px;font-size:13px;color:#085db0;-webkit-text-stroke:0.65px #085db0;transform:scaleX(1.0451);">Linear</span><svg class="i" style="left:1272.1px;top:272.2px" width="8.8" height="5.2" viewBox="0 0 8.8 5.2" ><path fill="#085db0" d="M0 0h8.800L4.400 5.200z"/></svg><svg class="i" style="left:1605.8px;top:266.3px" width="16" height="16" viewBox="0 0 16 16" ><path fill="none" stroke="#6fa8dc" stroke-width="2.300" d="M3.600 3.100A6.600 6.600 0 1 1 3.300 12.700"/><path fill="#6fa8dc" d="M.2 1v5.900h5.900z"/></svg><div class="b" style="left:1604.1px;top:294.2px;width:18px;height:14.7px;background:#eeeeee"></div><svg class="i" style="left:1604.1px;top:294.2px" width="18" height="14.7" viewBox="0 0 18 14.7" ><path fill="none" stroke="#666" stroke-width="1.1" d="M2.100 12.300C5 9 8.500 4.500 12 4.100c1.600-.1 2.600 1.100 3.400 2.300"/></svg><div class="b" style="left:1611.1px;top:328.3px;width:2.8px;height:205px;background:#dddddd"></div><div class="b" style="left:1604.2px;top:532.1px;width:15.8px;height:15.8px;background:#8aabb8;border-radius:8px;border:1.800px solid #dcedf4;box-sizing:border-box;box-shadow:1px 2px 3px rgba(0,0,0,.30)"></div><div class="b" style="left:1604.1px;top:558.9px;width:18px;height:14.9px;background:#eeeeee"></div><svg class="i" style="left:1604.1px;top:558.9px" width="18" height="14.9" viewBox="0 0 18 14.9" ><path fill="none" stroke="#666" stroke-width="1.200" stroke-linejoin="round" d="M2.100 12.200 5.700 7.700 9.400 12.500 12.400 2.800 15.700 7.400"/></svg><svg class="i" style="left:0;top:0" width="1673" height="910" viewBox="0 0 1673 910"><path d="M1167.4 292.7V556.3M1289.3 292.7V556.3M1411.2 292.7V556.3M1533.1 292.7V556.3M1045.5 321.7H1594.0M1045.5 360.6H1594.0M1045.5 399.6H1594.0M1045.5 438.7H1594.0M1045.5 478.1H1594.0M1045.5 517.1H1594.0" fill="none" stroke="#d6d6d6" stroke-width="1"/><path d="M1045.5 292.7V556.3H1594.0" fill="none" stroke="#c9c9c9" stroke-width="1.300"/><clipPath id="cp968"><rect x="1045.0" y="292.7" width="549.0" height="263.6"/></clipPath><g clip-path="url(#cp968)"><path d="M1063.7 512.5V531.8M1082.4 526.0V537.7M1118.9 511.0V539.8M1155.5 525.6V542.4M1173.6 521.6V535.9M1191.9 530.7V540.1M1210.0 532.0V537.5M1228.2 532.4V548.8M1246.9 531.7V555.3M1264.7 523.5V543.4M1283.5 531.6V555.3" fill="none" stroke="#ab34cf" stroke-width="1" opacity=".13"/><path d="M1064.1 501.0V524.7M1082.2 499.8V527.1M1119.0 518.3V533.3M1137.2 523.9V539.2M1155.3 518.7V531.3M1173.8 525.5V543.8M1191.8 515.4V534.7M1228.2 523.3V542.8M1264.7 514.4V529.6M1301.7 525.6V534.2M1320.1 527.3V531.1M1356.5 508.1V534.1M1392.8 524.4V548.6M1411.4 531.8V541.5M1429.8 528.4V552.4M1447.7 525.2V531.2M1484.4 521.1V537.3M1502.8 515.2V533.1M1520.7 523.7V540.9M1539.4 510.8V534.1M1557.5 524.8V546.6M1575.8 528.8V551.2" fill="none" stroke="#2c3e50" stroke-width="1" opacity=".13"/><path d="M1045.6 400.0L1045.8 440.0L1046.2 465.0L1046.9 480.0L1048.0 488.0L1049.5 494.5L1051.5 499.5L1053.1 502.8L1053.9 510.0L1054.6 517.5L1058.0 518.2L1062.1 519.3L1063.4 524.3L1064.8 522.5L1068.0 522.6L1071.0 522.8L1072.9 525.2L1075.0 524.5L1081.8 526.0L1086.0 526.3L1090.4 527.0L1090.8 532.3L1091.6 527.4L1095.0 528.0L1099.8 528.8L1100.6 531.0L1101.8 528.6L1108.7 528.8L1109.5 531.5L1110.6 529.2L1118.0 529.8L1128.4 530.5L1132.0 531.5L1136.5 532.3L1137.2 534.2L1138.0 532.0L1145.5 531.8L1145.9 537.7L1146.6 532.0L1150.0 531.6L1155.3 531.4L1155.8 534.5L1156.6 531.8L1164.3 532.3L1173.0 533.0L1182.2 533.6L1183.0 535.5L1184.0 533.5L1191.0 534.0L1200.2 534.5L1201.0 536.2L1202.0 534.3L1218.0 535.0L1236.0 535.4L1237.0 537.8L1238.0 535.6L1246.5 535.9L1247.2 537.5L1248.0 536.0L1264.0 536.4L1265.0 538.0L1266.0 536.3L1285.0 536.8L1285.5 537.3L1286.0 536.7L1286.5 536.6L1287.0 536.4L1287.5 536.5L1288.0 536.7L1288.5 537.0L1289.0 536.8L1289.5 536.6L1290.0 537.1L1290.5 537.3L1291.0 537.2L1291.5 536.9L1292.0 537.5L1292.5 537.8L1293.0 536.8L1293.5 537.4L1294.0 537.0L1294.5 537.6L1295.0 537.2L1295.5 537.6L1296.0 537.4L1296.5 537.1L1297.0 537.1L1297.5 537.0L1298.0 536.9L1298.5 536.4L1299.0 536.4L1299.5 536.6L1300.0 537.0L1300.5 537.0L1301.0 538.2L1301.5 539.1L1302.0 538.8L1302.5 538.4L1303.0 538.0L1303.5 538.3L1304.0 537.6L1304.5 537.7L1305.0 537.6L1305.5 537.8L1306.0 537.8L1306.5 537.6L1307.0 537.3L1307.5 536.7L1308.0 537.2L1308.5 537.2L1309.0 537.1L1309.5 537.4L1310.0 537.3L1310.5 537.5L1311.0 537.9L1311.5 537.1L1312.0 537.1L1312.5 537.3L1313.0 537.3L1313.5 536.9L1314.0 536.9L1314.5 536.9L1315.0 536.7L1315.5 537.2L1316.0 537.0L1316.5 536.6L1317.0 537.0L1317.5 537.5L1318.0 536.8L1318.5 537.0L1319.0 537.0L1319.5 536.9L1319.5 537.2" fill="none" stroke="#ab34cf" stroke-width="1.500" stroke-linejoin="round"/><path d="M1045.6 352.0L1045.8 400.0L1046.2 450.0L1046.9 478.0L1048.0 487.0L1049.5 493.8L1051.5 499.0L1054.0 502.8L1058.0 505.8L1062.5 508.1L1063.2 513.0L1063.9 518.0L1065.5 516.6L1067.5 516.2L1072.9 517.5L1077.0 518.0L1080.9 518.4L1081.6 516.8L1082.7 521.6L1085.0 521.0L1092.0 521.7L1099.8 521.9L1101.5 524.3L1104.0 523.2L1106.9 522.8L1113.0 522.6L1118.6 522.5L1119.5 524.6L1125.0 524.0L1131.0 523.8L1137.4 523.9L1138.3 526.1L1141.0 525.2L1148.0 524.9L1155.3 524.8L1156.2 526.1L1160.0 525.6L1170.0 525.5L1180.0 525.5L1190.5 525.7L1191.3 524.2L1192.0 525.9L1200.0 526.2L1209.1 526.4L1210.5 528.2L1213.0 527.1L1220.0 527.0L1227.0 527.1L1228.8 528.2L1233.0 527.5L1240.0 527.4L1245.9 527.5L1246.8 529.7L1250.0 528.0L1258.0 527.8L1264.0 527.7L1265.0 526.5L1266.0 528.3L1275.0 528.2L1285.0 528.2L1285.5 528.4L1286.0 528.4L1286.5 528.4L1287.0 528.5L1287.5 528.4L1288.0 528.6L1288.5 528.4L1289.0 528.3L1289.5 528.3L1290.0 528.2L1290.5 528.6L1291.0 528.6L1291.5 528.5L1292.0 528.5L1292.5 528.4L1293.0 529.0L1293.5 528.9L1294.0 528.8L1294.5 528.7L1295.0 528.5L1295.5 528.7L1296.0 528.4L1296.5 528.3L1297.0 528.5L1297.5 528.5L1298.0 528.4L1298.5 528.6L1299.0 528.6L1299.5 528.5L1300.0 528.7L1300.5 528.8L1301.0 528.3L1301.5 527.8L1302.0 528.4L1302.5 528.3L1303.0 528.6L1303.5 528.8L1304.0 528.8L1304.5 528.6L1305.0 529.0L1305.5 528.9L1306.0 529.1L1306.5 529.4L1307.0 528.9L1307.5 528.9L1308.0 529.3L1308.5 529.2L1309.0 529.4L1309.5 529.3L1310.0 529.6L1310.5 529.7L1311.0 529.1L1311.5 529.5L1312.0 529.4L1312.5 529.4L1313.0 529.6L1313.5 529.9L1314.0 529.6L1314.5 529.4L1315.0 529.2L1315.5 529.5L1316.0 529.5L1316.5 529.7L1317.0 529.7L1317.5 529.3L1318.0 529.5L1318.5 529.5L1319.0 528.4L1319.5 528.0L1320.0 526.9L1320.5 527.9L1321.0 527.9L1321.5 528.5L1322.0 528.7L1322.5 529.0L1323.0 528.9L1323.5 529.1L1324.0 529.1L1324.5 529.1L1325.0 529.4L1325.5 529.0L1326.0 529.0L1326.5 528.9L1327.0 529.0L1327.5 529.0L1328.0 529.1L1328.5 529.0L1329.0 529.4L1329.5 529.3L1330.0 529.2L1330.5 529.4L1331.0 529.3L1331.5 529.2L1332.0 529.2L1332.5 529.4L1333.0 529.3L1333.5 529.5L1334.0 529.4L1334.5 529.5L1335.0 529.3L1335.5 529.5L1336.0 529.7L1336.5 529.6L1337.0 529.5L1337.5 529.8L1338.0 529.7L1338.5 530.2L1339.0 529.9L1339.5 529.8L1340.0 529.6L1340.5 529.2L1341.0 529.2L1341.5 529.7L1342.0 529.2L1342.5 529.4L1343.0 529.4L1343.5 529.1L1344.0 529.2L1344.5 529.0L1345.0 529.1L1345.5 529.1L1346.0 529.6L1346.5 529.6L1347.0 529.8L1347.5 529.6L1348.0 529.5L1348.5 529.7L1349.0 529.9L1349.5 529.6L1350.0 529.6L1350.5 529.8L1351.0 529.8L1351.5 529.4L1352.0 529.7L1352.5 529.7L1353.0 529.7L1353.5 530.2L1354.0 530.1L1354.5 529.8L1355.0 530.0L1355.5 529.1L1356.0 529.2L1356.5 528.0L1357.0 528.7L1357.5 529.2L1358.0 529.6L1358.5 529.3L1359.0 529.7L1359.5 529.5L1360.0 529.6L1360.5 529.8L1361.0 529.6L1361.5 529.5L1362.0 529.9L1362.5 529.6L1363.0 529.5L1363.5 529.6L1364.0 529.4L1364.5 529.4L1365.0 529.2L1365.5 529.6L1366.0 529.7L1366.5 529.7L1367.0 529.4L1367.5 529.6L1368.0 529.4L1368.5 529.5L1369.0 529.7L1369.5 529.7L1370.0 529.7L1370.5 529.4L1371.0 529.5L1371.5 529.9L1372.0 529.8L1372.5 530.0L1373.0 530.4L1373.5 529.7L1374.0 529.6L1374.5 528.8L1375.0 528.8L1375.5 529.0L1376.0 529.2L1376.5 528.9L1377.0 529.3L1377.5 529.6L1378.0 529.6L1378.5 529.8L1379.0 529.8L1379.5 529.9L1380.0 529.6L1380.5 529.4L1381.0 529.7L1381.5 529.7L1382.0 529.7L1382.5 529.9L1383.0 530.1L1383.5 530.1L1384.0 529.6L1384.5 529.8L1385.0 530.0L1385.5 529.7L1386.0 529.5L1386.5 529.7L1387.0 529.7L1387.5 529.6L1388.0 529.8L1388.5 529.9L1389.0 529.8L1389.5 529.8L1390.0 529.9L1390.5 529.5L1391.0 529.7L1391.5 529.8L1392.0 529.5L1392.5 528.4L1393.0 527.5L1393.5 527.9L1394.0 528.1L1394.5 528.9L1395.0 529.0L1395.5 529.2L1396.0 529.5L1396.5 529.9L1397.0 529.7L1397.5 529.8L1398.0 529.7L1398.5 530.1L1399.0 530.2L1399.5 530.2L1400.0 530.2L1400.5 529.8L1401.0 530.0L1401.5 530.1L1402.0 530.0L1402.5 530.2L1403.0 530.3L1403.5 530.0L1404.0 530.1L1404.5 529.9L1405.0 529.9L1405.5 529.8L1406.0 530.0L1406.5 529.7L1407.0 530.0L1407.5 530.2L1408.0 530.0L1408.5 530.1L1409.0 529.8L1409.5 529.8L1410.0 530.1L1410.5 530.7L1411.0 531.5L1411.5 532.0L1412.0 531.5L1412.5 531.4L1413.0 531.1L1413.5 530.9L1414.0 531.0L1414.5 530.7L1415.0 530.6L1415.5 530.5L1416.0 530.6L1416.5 530.5L1417.0 530.1L1417.5 530.5L1418.0 530.7L1418.5 530.2L1419.0 530.1L1419.5 530.3L1420.0 530.3L1420.5 530.0L1421.0 530.1L1421.5 530.1L1422.0 530.2L1422.5 530.4L1423.0 530.4L1423.5 530.2L1424.0 530.5L1424.5 530.5L1425.0 530.6L1425.5 530.7L1426.0 530.5L1426.5 530.4L1427.0 530.2L1427.5 530.2L1428.0 530.4L1428.5 530.0L1429.0 529.2L1429.5 528.4L1430.0 528.4L1430.5 529.2L1431.0 529.3L1431.5 529.6L1432.0 529.9L1432.5 529.7L1433.0 529.8L1433.5 529.8L1434.0 529.6L1434.5 529.7L1435.0 529.7L1435.5 529.7L1436.0 529.6L1436.5 529.7L1437.0 530.0L1437.5 529.5L1438.0 529.9L1438.5 529.8L1439.0 529.8L1439.5 530.0L1440.0 530.1L1440.5 529.9L1441.0 529.8L1441.5 530.0L1442.0 529.8L1442.5 530.0L1443.0 529.9L1443.5 530.3L1444.0 530.2L1444.5 530.1L1445.0 530.3L1445.5 530.1L1446.0 530.0L1446.5 530.3L1447.0 530.6L1447.5 531.1L1448.0 531.3L1448.5 530.9L1449.0 530.7L1449.5 530.7L1450.0 530.6L1450.5 530.5L1451.0 530.6L1451.5 530.4L1452.0 530.9L1452.5 531.0L1453.0 530.7L1453.5 531.0L1454.0 530.5L1454.5 531.0L1455.0 530.8L1455.5 530.8L1456.0 530.9L1456.5 530.6L1457.0 530.8L1457.5 530.8L1458.0 530.5L1458.5 530.7L1459.0 530.8L1459.5 530.9L1460.0 531.3L1460.5 531.2L1461.0 530.9L1461.5 530.6L1462.0 531.1L1462.5 531.0L1463.0 531.3L1463.5 531.0L1464.0 531.1L1464.5 531.0L1465.0 530.8L1465.5 531.2L1466.0 531.3L1466.5 531.3L1467.0 531.1L1467.5 531.2L1468.0 531.3L1468.5 530.8L1469.0 531.1L1469.5 531.0L1470.0 530.9L1470.5 531.2L1471.0 530.9L1471.5 531.2L1472.0 531.2L1472.5 531.1L1473.0 530.7L1473.5 530.9L1474.0 530.9L1474.5 531.0L1475.0 530.9L1475.5 530.9L1476.0 530.6L1476.5 530.6L1477.0 530.6L1477.5 530.7L1478.0 531.1L1478.5 530.8L1479.0 530.6L1479.5 530.4L1480.0 530.7L1480.5 530.4L1481.0 530.6L1481.5 530.8L1482.0 530.5L1482.5 530.9L1483.0 530.5L1483.5 531.0L1484.0 531.9L1484.5 532.9L1485.0 532.4L1485.5 531.7L1486.0 531.6L1486.5 531.6L1487.0 531.3L1487.5 530.9L1488.0 530.9L1488.5 530.9L1489.0 530.9L1489.5 530.7L1490.0 530.5L1490.5 530.7L1491.0 531.1L1491.5 530.9L1492.0 531.0L1492.5 530.8L1493.0 530.5L1493.5 530.5L1494.0 530.5L1494.5 530.7L1495.0 531.0L1495.5 530.4L1496.0 530.3L1496.5 530.4L1497.0 530.6L1497.5 530.1L1498.0 530.3L1498.5 530.3L1499.0 530.9L1499.5 530.7L1500.0 530.8L1500.5 530.6L1501.0 530.5L1501.5 530.8L1502.0 532.0L1502.5 532.9L1503.0 533.5L1503.5 533.1L1504.0 532.4L1504.5 531.8L1505.0 531.4L1505.5 531.3L1506.0 531.3L1506.5 531.3L1507.0 531.2L1507.5 531.3L1508.0 531.0L1508.5 531.0L1509.0 531.2L1509.5 531.2L1510.0 531.1L1510.5 530.8L1511.0 530.9L1511.5 530.7L1512.0 531.0L1512.5 531.0L1513.0 531.0L1513.5 530.9L1514.0 531.0L1514.5 530.9L1515.0 531.0L1515.5 530.7L1516.0 531.4L1516.5 531.3L1517.0 531.1L1517.5 531.0L1518.0 530.8L1518.5 531.2L1519.0 531.2L1519.5 531.3L1520.0 531.6L1520.5 531.4L1521.0 531.9L1521.5 531.7L1522.0 531.2L1522.5 531.4L1523.0 531.1L1523.5 530.9L1524.0 530.8L1524.5 530.8L1525.0 530.8L1525.5 530.9L1526.0 531.2L1526.5 530.8L1527.0 530.8L1527.5 531.0L1528.0 530.8L1528.5 530.8L1529.0 530.7L1529.5 531.0L1530.0 530.9L1530.5 530.3L1531.0 530.6L1531.5 530.4L1532.0 530.7L1532.5 530.6L1533.0 530.4L1533.5 530.4L1534.0 530.6L1534.5 530.5L1535.0 530.4L1535.5 530.9L1536.0 530.8L1536.5 530.3L1537.0 530.9L1537.5 530.7L1538.0 530.7L1538.5 530.3L1539.0 529.9L1539.5 529.4L1540.0 529.8L1540.5 530.1L1541.0 530.4L1541.5 531.1L1542.0 530.9L1542.5 531.2L1543.0 531.1L1543.5 530.7L1544.0 530.9L1544.5 530.8L1545.0 530.9L1545.5 530.9L1546.0 531.3L1546.5 531.4L1547.0 531.4L1547.5 531.4L1548.0 531.5L1548.5 531.4L1549.0 531.5L1549.5 531.4L1550.0 531.6L1550.5 531.3L1551.0 531.2L1551.5 531.2L1552.0 531.9L1552.5 531.3L1553.0 531.4L1553.5 531.5L1554.0 531.5L1554.5 531.6L1555.0 531.2L1555.5 531.4L1556.0 531.8L1556.5 531.9L1557.0 532.6L1557.5 533.4L1558.0 533.8L1558.5 533.3L1559.0 532.8L1559.5 532.5L1560.0 532.3L1560.5 532.3L1561.0 531.8L1561.5 531.9L1562.0 531.7L1562.5 531.7L1563.0 531.5L1563.5 531.2L1564.0 531.7L1564.5 531.5L1565.0 531.3L1565.5 531.3L1566.0 531.6L1566.5 531.2L1567.0 531.3L1567.5 531.2L1568.0 531.2L1568.5 531.3L1569.0 531.4L1569.5 531.5L1570.0 531.5L1570.5 531.8L1571.0 531.8L1571.5 531.6L1572.0 531.6L1572.5 531.9L1573.0 531.6L1573.5 531.5L1574.0 531.4L1574.5 531.3L1575.0 532.1L1575.5 532.7L1576.0 533.6L1576.5 533.2L1577.0 532.9L1577.5 532.4L1578.0 532.2L1578.5 532.1L1579.0 532.1L1579.5 532.1L1580.0 531.8L1580.5 532.1L1581.0 532.0L1581.5 532.0L1582.0 531.7L1582.5 531.6L1583.0 531.5L1583.5 531.2L1584.0 531.2L1584.5 531.6L1585.0 531.6L1585.5 531.2L1586.0 531.0L1586.5 531.5L1587.0 531.5L1587.5 531.6L1588.0 531.5L1588.5 531.7L1589.0 531.5L1589.5 531.4L1590.0 531.7L1590.5 531.5L1591.0 531.6L1591.5 531.7L1592.0 531.4L1592.5 531.6L1593.0 531.6L1593.5 531.3L1594.0 531.3L1594.0 531.5" fill="none" stroke="#2c3e50" stroke-width="1.500" stroke-linejoin="round"/></g></svg><span class="t" id="t49" style="left:1017.42px;top:319.02px;font-size:12px;color:#444;-webkit-text-stroke:0.216px #444;transform:scaleX(1.0608);">3.00</span><span class="t" id="t50" style="left:1017.42px;top:358.01px;font-size:12px;color:#444;-webkit-text-stroke:0.216px #444;transform:scaleX(1.0608);">2.50</span><span class="t" id="t51" style="left:1017.42px;top:397.01px;font-size:12px;color:#444;-webkit-text-stroke:0.216px #444;transform:scaleX(1.0608);">2.00</span><span class="t" id="t52" style="left:1017.42px;top:436.02px;font-size:12px;color:#444;-webkit-text-stroke:0.216px #444;transform:scaleX(1.0608);">1.50</span><span class="t" id="t53" style="left:1017.42px;top:476.01px;font-size:12px;color:#444;-webkit-text-stroke:0.216px #444;transform:scaleX(1.0608);">1.00</span><span class="t" id="t54" style="left:1010.72px;top:515.01px;font-size:12px;color:#444;-webkit-text-stroke:0.216px #444;transform:scaleX(1.0482);">0.500</span><span class="t" id="t55" style="left:1017.52px;top:547.01px;font-size:12px;color:#444;-webkit-text-stroke:0.216px #444;transform:scaleX(1.0565);">0.00</span><span class="t" id="t56" style="left:1033.02px;top:564.01px;font-size:12px;color:#444;-webkit-text-stroke:0.216px #444;transform:scaleX(1.0737);">0.00</span><span class="t" id="t57" style="left:1144.92px;top:564.01px;font-size:12px;color:#444;-webkit-text-stroke:0.216px #444;transform:scaleX(1.0311);">1.00e+4</span><span class="t" id="t58" style="left:1266.82px;top:564.01px;font-size:12px;color:#444;-webkit-text-stroke:0.216px #444;transform:scaleX(1.0311);">2.00e+4</span><span class="t" id="t59" style="left:1388.72px;top:564.01px;font-size:12px;color:#444;-webkit-text-stroke:0.216px #444;transform:scaleX(1.0311);">3.00e+4</span><span class="t" id="t60" style="left:1510.62px;top:564.01px;font-size:12px;color:#444;-webkit-text-stroke:0.216px #444;transform:scaleX(1.0311);">4.00e+4</span><div class="b" style="left:287px;top:614px;width:665px;height:394px;border:1px solid #c8c8c8;border-radius:4px;box-sizing:border-box;background:#fff"></div><div class="b" style="left:288px;top:615px;width:663px;height:31.7px;background:#f7f7f7;border-radius:3px 3px 0 0"></div><span class="t" id="t61" style="left:296.48px;top:625.00px;font-size:13px;color:#333;-webkit-text-stroke:0.65px #333;transform:scaleX(1.0535);">metrics/epoch/accuracy</span><svg class="i" style="left:896.2px;top:624.1px" width="14.2" height="13.4" viewBox="0 0 14.2 13.4" ><path fill="none" stroke="#085db0" stroke-width="2" stroke-linecap="round" stroke-linejoin="round" d="M7.100 1v8.600M1.900 5.100l5.200 5 5-5"/><path stroke="#085db0" stroke-width="2" stroke-linecap="round" d="M1 12.300h12.200"/></svg><svg class="i" style="left:928.4px;top:624.5px" width="13.2" height="12.4" viewBox="0 0 13.2 12.4" ><path fill="none" stroke="#085db0" stroke-width="2" d="M1 4.800V1h3.800M8.400 1h3.800v3.800M12.200 7.600v3.800H8.400M4.800 11.400H1V7.600"/></svg><span class="t" id="t62" style="left:357.85px;top:659.01px;font-size:11.2px;color:#595959;-webkit-text-stroke:0.202px #595959;transform:scaleX(0.9859);">x-axis</span><div class="b" style="left:358px;top:673.2px;width:125px;height:21.6px;background:#f2f2f2;border-radius:4px"></div><span class="t" id="t63" style="left:398.68px;top:678.01px;font-size:13px;color:#085db0;-webkit-text-stroke:0.65px #085db0;transform:scaleX(1.0194);">Step</span><svg class="i" style="left:458.2px;top:682.2px" width="8.8" height="5.2" viewBox="0 0 8.8 5.2" ><path fill="#085db0" d="M0 0h8.800L4.400 5.200z"/></svg><span class="t" id="t64" style="left:490.65px;top:659.01px;font-size:11.2px;color:#595959;-webkit-text-stroke:0.202px #595959;transform:scaleX(1.0065);">y-axis</span><div class="b" style="left:491px;top:673.2px;width:125px;height:21.6px;background:#f2f2f2;border-radius:4px"></div><span class="t" id="t65" style="left:526.48px;top:678.01px;font-size:13px;color:#085db0;-webkit-text-stroke:0.65px #085db0;transform:scaleX(1.0451);">Linear</span><svg class="i" style="left:591.1px;top:682.2px" width="8.8" height="5.2" viewBox="0 0 8.8 5.2" ><path fill="#085db0" d="M0 0h8.800L4.400 5.200z"/></svg><svg class="i" style="left:924.8px;top:676.3px" width="16" height="16" viewBox="0 0 16 16" ><path fill="none" stroke="#6fa8dc" stroke-width="2.300" d="M3.600 3.100A6.600 6.600 0 1 1 3.300 12.700"/><path fill="#6fa8dc" d="M.2 1v5.900h5.900z"/></svg><div class="b" style="left:923.1px;top:704.2px;width:18px;height:14.7px;background:#eeeeee"></div><svg class="i" style="left:923.1px;top:704.2px" width="18" height="14.7" viewBox="0 0 18 14.7" ><path fill="none" stroke="#666" stroke-width="1.1" d="M2.100 12.300C5 9 8.500 4.500 12 4.100c1.600-.1 2.600 1.100 3.400 2.300"/></svg><div class="b" style="left:930.1px;top:738.3px;width:2.8px;height:205px;background:#dddddd"></div><svg class="i" style="left:0;top:0" width="1673" height="910" viewBox="0 0 1673 910"><path d="M459.1 702.7V915.0M553.7 702.7V915.0M648.3 702.7V915.0M742.9 702.7V915.0M837.5 702.7V915.0M364.5 732.5H913.0M364.5 806.3H913.0M364.5 879.7H913.0" fill="none" stroke="#d6d6d6" stroke-width="1"/><path d="M364.5 702.7V915.0" fill="none" stroke="#c9c9c9" stroke-width="1.300"/><path d="M364.4 938.0L383.3 842.9L402.2 817.6L421.1 806.6L440.0 793.8L458.9 786.4L477.9 781.3L496.8 773.0L515.7 771.4L534.6 768.4L553.5 763.5L572.4 761.5L591.3 758.2L610.2 754.9L629.1 751.0L648.0 750.8L667.0 745.5L685.9 745.5L704.8 745.3L723.7 741.8L742.6 739.6L761.5 738.2L780.4 734.7L799.3 734.1L818.2 735.6L837.1 729.2L856.1 731.2L875.0 728.1L893.9 726.6L912.8 725.1" fill="none" stroke="#ab34cf" stroke-width="1.500" stroke-linejoin="round"/><path d="M364.4 909.7L383.3 843.3L402.2 826.4L421.1 818.0L440.0 809.5L458.9 803.7L477.9 801.8L496.8 796.7L515.7 793.4L534.6 791.4L553.5 788.6L572.4 787.7L591.3 783.7L610.2 781.8L629.1 782.0L648.0 775.6L667.0 780.2L685.9 775.8L704.8 772.7L723.7 772.3L742.6 771.9L761.5 768.1L780.4 766.8L799.3 765.7L818.2 765.7L837.1 763.7L856.1 763.5L875.0 762.2L893.9 763.1L912.8 762.4" fill="none" stroke="#2c3e50" stroke-width="1.500" stroke-linejoin="round"/></svg><span class="t" id="t66" style="left:329.72px;top:730.00px;font-size:12px;color:#444;-webkit-text-stroke:0.216px #444;transform:scaleX(1.0482);">0.900</span><span class="t" id="t67" style="left:329.72px;top:804.01px;font-size:12px;color:#444;-webkit-text-stroke:0.216px #444;transform:scaleX(1.0482);">0.850</span><span class="t" id="t68" style="left:329.72px;top:877.02px;font-size:12px;color:#444;-webkit-text-stroke:0.216px #444;transform:scaleX(1.0482);">0.800</span><div class="b" style="left:968px;top:614px;width:665px;height:394px;border:1px solid #c8c8c8;border-radius:4px;box-sizing:border-box;background:#fff"></div><div class="b" style="left:969px;top:615px;width:663px;height:31.7px;background:#f7f7f7;border-radius:3px 3px 0 0"></div><span class="t" id="t69" style="left:977.48px;top:625.00px;font-size:13px;color:#333;-webkit-text-stroke:0.65px #333;transform:scaleX(1.0698);">metrics/epoch/loss</span><svg class="i" style="left:1577.2px;top:624.1px" width="14.2" height="13.4" viewBox="0 0 14.2 13.4" ><path fill="none" stroke="#085db0" stroke-width="2" stroke-linecap="round" stroke-linejoin="round" d="M7.100 1v8.600M1.900 5.100l5.200 5 5-5"/><path stroke="#085db0" stroke-width="2" stroke-linecap="round" d="M1 12.300h12.200"/></svg><svg class="i" style="left:1609.4px;top:624.5px" width="13.2" height="12.4" viewBox="0 0 13.2 12.4" ><path fill="none" stroke="#085db0" stroke-width="2" d="M1 4.800V1h3.800M8.400 1h3.800v3.800M12.200 7.600v3.800H8.400M4.800 11.400H1V7.600"/></svg><span class="t" id="t70" style="left:1038.85px;top:659.01px;font-size:11.2px;color:#595959;-webkit-text-stroke:0.202px #595959;transform:scaleX(0.9859);">x-axis</span><div class="b" style="left:1039px;top:673.2px;width:125px;height:21.6px;background:#f2f2f2;border-radius:4px"></div><span class="t" id="t71" style="left:1079.68px;top:678.01px;font-size:13px;color:#085db0;-webkit-text-stroke:0.65px #085db0;transform:scaleX(1.0194);">Step</span><svg class="i" style="left:1139.2px;top:682.2px" width="8.8" height="5.2" viewBox="0 0 8.8 5.2" ><path fill="#085db0" d="M0 0h8.800L4.400 5.200z"/></svg><span class="t" id="t72" style="left:1171.65px;top:659.01px;font-size:11.2px;color:#595959;-webkit-text-stroke:0.202px #595959;transform:scaleX(1.0065);">y-axis</span><div class="b" style="left:1172px;top:673.2px;width:125px;height:21.6px;background:#f2f2f2;border-radius:4px"></div><span class="t" id="t73" style="left:1207.48px;top:678.01px;font-size:13px;color:#085db0;-webkit-text-stroke:0.65px #085db0;transform:scaleX(1.0451);">Linear</span><svg class="i" style="left:1272.1px;top:682.2px" width="8.8" height="5.2" viewBox="0 0 8.8 5.2" ><path fill="#085db0" d="M0 0h8.800L4.400 5.200z"/></svg><svg class="i" style="left:1605.8px;top:676.3px" width="16" height="16" viewBox="0 0 16 16" ><path fill="none" stroke="#6fa8dc" stroke-width="2.300" d="M3.600 3.100A6.600 6.600 0 1 1 3.300 12.700"/><path fill="#6fa8dc" d="M.2 1v5.900h5.900z"/></svg><div class="b" style="left:1604.1px;top:704.2px;width:18px;height:14.7px;background:#dcdcdc"></div><svg class="i" style="left:1604.1px;top:704.2px" width="18" height="14.7" viewBox="0 0 18 14.7" ><path fill="none" stroke="#222" stroke-width="1.4" d="M2.100 12.300C5 9 8.500 4.500 12 4.100c1.600-.1 2.600 1.100 3.400 2.300"/></svg><div class="b" style="left:1611.1px;top:738.3px;width:2.8px;height:205px;background:#dddddd"></div><svg class="i" style="left:0;top:0" width="1673" height="910" viewBox="0 0 1673 910"><path d="M1234.7 702.7V915.0M1329.3 702.7V915.0M1423.9 702.7V915.0M1518.5 702.7V915.0M1045.5 708.4H1594.0M1045.5 761.3H1594.0M1045.5 813.6H1594.0M1045.5 866.4H1594.0" fill="none" stroke="#d6d6d6" stroke-width="1"/><path d="M1045.5 702.7V915.0" fill="none" stroke="#c9c9c9" stroke-width="1.300"/><path d="M1140.4 702.7V915.0" fill="none" stroke="#222" stroke-width="1" stroke-dasharray="3 2"/><path d="M1045.6 725.3L1064.5 825.9L1083.5 849.0L1102.4 863.7L1121.3 874.7L1140.2 882.0L1159.2 886.8L1178.1 894.7L1197.0 897.5L1216.0 900.0" fill="none" stroke="#ab34cf" stroke-width="1.500" stroke-linejoin="round"/><path d="M1045.6 754.9L1064.5 821.5L1083.5 840.2L1102.4 847.7L1121.3 855.2L1140.2 862.2L1159.2 866.6L1178.1 869.2L1197.0 873.6L1216.0 876.0L1234.9 878.7L1253.8 880.7L1272.8 883.1L1291.7 884.8L1310.6 887.3L1329.5 891.2L1348.5 890.8L1367.4 893.0L1386.3 895.0L1405.3 896.8L1424.2 898.5L1443.1 900.0" fill="none" stroke="#2c3e50" stroke-width="1.500" stroke-linejoin="round"/></svg><span class="t" id="t74" style="left:1010.72px;top:707.01px;font-size:12px;color:#444;-webkit-text-stroke:0.216px #444;transform:scaleX(1.0482);">0.700</span><span class="t" id="t75" style="left:1010.72px;top:759.01px;font-size:12px;color:#444;-webkit-text-stroke:0.216px #444;transform:scaleX(1.0482);">0.600</span><span class="t" id="t76" style="left:1010.72px;top:811.01px;font-size:12px;color:#444;-webkit-text-stroke:0.216px #444;transform:scaleX(1.0482);">0.500</span><span class="t" id="t77" style="left:1010.72px;top:864.01px;font-size:12px;color:#444;-webkit-text-stroke:0.216px #444;transform:scaleX(1.0482);">0.400</span></div></div><div class="b" style="left:0px;top:0px;width:1673px;height:10px;background:#f7f7f7;border-bottom:1px solid #dcdcdc;z-index:7"></div><div class="b" style="left:3px;top:-4px;width:40px;height:9.5px;background:#efefef;border-radius:4px;z-index:8"></div><div class="b" style="left:1024px;top:-4px;width:459px;height:9.5px;background:#e9f5f1;border-radius:4px;z-index:8"></div><div class="b" style="left:1491px;top:-4px;width:97px;height:9.5px;background:#efefef;border-radius:4px;z-index:8"></div><div class="b" style="left:1596px;top:-4px;width:31px;height:9.5px;background:#efefef;border-radius:4px;z-index:8"></div><div class="b" style="left:1634px;top:-4px;width:45px;height:9.5px;background:#efefef;border-radius:4px;z-index:8"></div><div class="b" style="left:1648px;top:-8.5px;width:10px;height:10px;background:#0a5cad;border-radius:5px;z-index:9"></div><div class="b" style="left:0px;top:11px;width:1673px;height:45.7px;background:#fff;box-shadow:0 2px 9px rgba(0,0,0,.17);z-index:5"></div><div class="hd"><div class="b" style="left:7px;top:19px;width:220px;height:30px;background:#f2f2f2;border-radius:5px"></div><div class="b" style="left:11px;top:24px;width:20px;height:20px;background:#f0592b;border-radius:4px"></div><span class="t" id="t78" style="left:39.18px;top:27.00px;font-size:15.5px;color:#085db0;-webkit-text-stroke:0.775px #085db0;transform:scaleX(1.0177);">example-project-tensor…</span><svg class="i" style="left:274.9px;top:28.9px" width="12.4" height="14.2" viewBox="0 0 12.4 14.2" ><path fill="#085db0" fill-rule="evenodd" d="M2.400 0h7.400v1.700H8.700v3.900l3.300 6c.7 1.300-.1 2.500-1.400 2.500H1.700C.4 14.100-.4 12.900.3 11.600l3.300-6V1.700H2.400zM4.900 1.700v4.300L3.500 8.700h5.200L7.300 6V1.700z"/></svg><span class="t" id="t79" style="left:295.28px;top:30.00px;font-size:13px;color:#085db0;-webkit-text-stroke:0.65px #085db0;transform:scaleX(1.0003);">Runs</span><div class="b" style="left:332.8px;top:27.8px;width:21.3px;height:16.1px;background:#085db0;border-radius:8.100px"></div><span class="t" id="t80" style="left:338.40px;top:31.00px;font-size:9.9px;color:#fff;font-weight:700;transform:scaleX(0.9551);">10</span><div class="b" style="left:259px;top:54.8px;width:111px;height:3.2px;background:#085db0"></div><span class="t" id="t81" style="left:394.08px;top:30.00px;font-size:13px;color:#595959;-webkit-text-stroke:0.65px #595959;transform:scaleX(1.0345);">Models</span><span class="t" id="t82" style="left:477.28px;top:30.00px;font-size:13px;color:#595959;-webkit-text-stroke:0.65px #595959;transform:scaleX(1.0528);">Project metadata</span><svg class="i" style="left:620.3px;top:28.8px" width="11" height="14.6" viewBox="0 0 11 14.6" ><path fill="none" stroke="#595959" stroke-width="1.3" stroke-linejoin="round" d="M1.900.7h4.800l3.600 3.600v8.400c0 .7-.5 1.200-1.200 1.200H1.900c-.7 0-1.200-.5-1.200-1.200V1.900c0-.7.5-1.200 1.200-1.200z"/><path fill="none" stroke="#595959" stroke-width="1" d="M6.600.8v3.600h3.600M4.300 7.800 2.900 9.300l1.400 1.500M6.700 7.800l1.400 1.500-1.400 1.500M5.900 7.300l-.8 4"/></svg><span class="t" id="t83" style="left:639.18px;top:30.00px;font-size:13px;color:#595959;-webkit-text-stroke:0.65px #595959;transform:scaleX(1.0533);">Notebooks</span><div class="b" style="left:712px;top:27.8px;width:16.1px;height:16.1px;background:#5c5c5c;border-radius:8.100px"></div><span class="t" id="t84" style="left:716.90px;top:31.00px;font-size:9.9px;color:#fff;font-weight:700;transform:scaleX(0.9980);">0</span><svg class="i" style="left:768.3px;top:29.3px" width="13.2" height="13.4" viewBox="0 0 13.2 13.4" ><path fill="#595959" stroke="#595959" stroke-width=".8" stroke-linejoin="round" fill-rule="evenodd" d="M4.84 2.02L5.14 0.16L8.06 0.16L8.36 2.02L9.77 2.83L11.53 2.16L12.99 4.70L11.53 5.89L11.53 7.51L12.99 8.70L11.53 11.24L9.77 10.57L8.36 11.38L8.06 13.24L5.14 13.24L4.84 11.38L3.43 10.57L1.67 11.24L0.21 8.70L1.67 7.51L1.67 5.89L0.21 4.70L1.67 2.16L3.43 2.83Z M6.600 4.400a2.300 2.300 0 1 0 0 4.600a2.300 2.300 0 1 0 0-4.600z"/></svg><span class="t" id="t85" style="left:790.28px;top:30.00px;font-size:13px;color:#595959;-webkit-text-stroke:0.65px #595959;transform:scaleX(1.0529);">Settings</span><div class="b" style="left:863px;top:15px;width:1px;height:33.5px;background:#ccc"></div><svg class="i" style="left:887.6px;top:29px" width="13.2" height="14.4" viewBox="0 0 13.2 14.4" ><path fill="none" stroke="#595959" stroke-width="1.3" stroke-linejoin="round" d="M.4 2.700h12.400M4.300 2.500l.8-1.700h3l.8 1.700M1.800 2.900v9.600c0 .7.500 1.200 1.200 1.200h7.200c.7 0 1.200-.5 1.200-1.200V2.900"/><path fill="none" stroke="#595959" stroke-width="1.1" d="M4.600 5.200v6.200M6.600 5.200v6.200M8.600 5.200v6.200"/></svg><span class="t" id="t86" style="left:908.78px;top:30.00px;font-size:13px;color:#595959;-webkit-text-stroke:0.65px #595959;transform:scaleX(0.9945);">Trash</span><div class="b" style="left:948.8px;top:27.8px;width:16.1px;height:16.1px;background:#5c5c5c;border-radius:8.100px"></div><span class="t" id="t87" style="left:953.70px;top:31.00px;font-size:9.9px;color:#fff;font-weight:700;transform:scaleX(0.9980);">0</span><div class="b" style="left:1587px;top:19px;width:100px;height:30px;background:#085db0;border-radius:4px"></div><svg class="i" style="left:1603px;top:28.1px" width="18" height="12" viewBox="0 0 18 12" ><circle cx="5.600" cy="3" r="3" fill="#fff"/><circle cx="13.400" cy="3.800" r="2.400" fill="#fff"/><path fill="#fff" d="M0 11.300V10c0-1.900 1.500-3.300 3.300-3.300h4.600c1.800 0 3.300 1.400 3.300 3.300v1.300c0 .4-.3.700-.7.700H.7c-.4 0-.7-.3-.7-.7z"/><path fill="#fff" d="M12.300 12v-2.300c0-1-.4-1.900-1-2.600.3-.1.700-.2 1.100-.2h2.400c1.800 0 3.200 1.300 3.200 3v1.400c0 .4-.3.700-.7.700z"/></svg><span class="t" id="t88" style="left:1629.48px;top:28.00px;font-size:13px;color:#fff;-webkit-text-stroke:0.65px #fff;transform:scaleX(1.0135);">Share</span></div><div class="b" style="left:1620.1px;top:844px;width:47.800px;height:47.800px;border-radius:50%;background:#5769c0;box-shadow:0 1px 6px 0 rgba(0,0,0,.06),0 2px 32px 0 rgba(0,0,0,.16);z-index:9"><svg class="i" style="left:0;top:0" width="47.800" height="47.800" viewBox="0 0 47.800 47.800"><path fill="#fff" d="M15.700 11.600h17.400c1.100 0 2 .9 2 2V36l-6.400-2.400H15.700c-1.400 0-2.500-1.100-2.500-2.500V14.100c0-1.400 1.100-2.500 2.500-2.500z"/><path fill="none" stroke="#5769c0" stroke-width="1.300" stroke-linecap="round" d="M16.200 26.900c4.600 3.600 10.600 3.600 15.200 0"/></svg></div>
</div>
</body></html>
